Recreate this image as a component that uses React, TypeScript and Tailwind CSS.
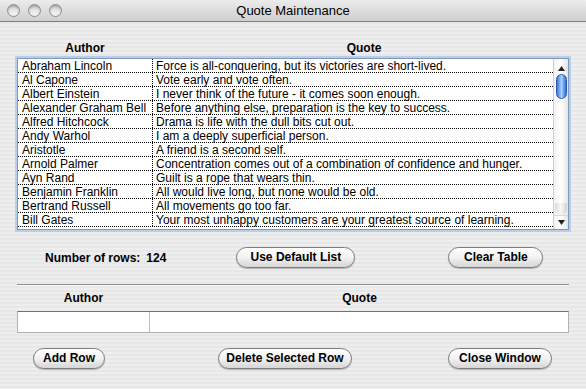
import React from "react";

const quotes: [string, string][] = [
  ["Abraham Lincoln", "Force is all-conquering, but its victories are short-lived."],
  ["Al Capone", "Vote early and vote often."],
  ["Albert Einstein", "I never think of the future - it comes soon enough."],
  ["Alexander Graham Bell", "Before anything else, preparation is the key to success."],
  ["Alfred Hitchcock", "Drama is life with the dull bits cut out."],
  ["Andy Warhol", "I am a deeply superficial person."],
  ["Aristotle", "A friend is a second self."],
  ["Arnold Palmer", "Concentration comes out of a combination of confidence and hunger."],
  ["Ayn Rand", "Guilt is a rope that wears thin."],
  ["Benjamin Franklin", "All would live long, but none would be old."],
  ["Bertrand Russell", "All movements go too far."],
  ["Bill Gates", "Your most unhappy customers are your greatest source of learning."],
];

const AquaButton = ({ label, className }: { label: string; className: string }) => (
  <button
    className={`h-[21px] rounded-full border border-[#7c7c7c] bg-gradient-to-b from-white via-[#f2f2f2] to-[#d6d6d6] text-[12px] leading-[19px] font-bold text-black shadow-[0_1px_1px_rgba(0,0,0,0.25)] ${className}`}
  >
    {label}
  </button>
);

const Light = () => (
  <div className="h-[13px] w-[13px] rounded-full border border-[#8e8e8e] bg-gradient-to-b from-[#c4c4c4] via-[#e6e6e6] to-[#f6f6f6] shadow-[inset_0_1px_2px_rgba(0,0,0,0.25)]" />
);

export default function App() {
  return (
    <div className="h-[389px] w-[586px] overflow-hidden bg-[repeating-linear-gradient(180deg,#eeeeee_0px,#eeeeee_2px,#e7e7e7_2px,#e7e7e7_4px)] font-[family-name:'Liberation_Sans',Arial,sans-serif] text-black">
      {/* Title bar */}
      <div className="relative flex h-[22px] items-center justify-center rounded-t-[5px] border-b border-[#7f7f7f] bg-gradient-to-b from-[#ececec] to-[#cfcfcf]">
        <div className="absolute left-[7px] top-[4px] flex gap-[8px]">
          <Light />
          <Light />
          <Light />
        </div>
        <span className="text-[13px] leading-[16px]">Quote Maintenance</span>
      </div>

      <div className="px-[17px]">
        {/* List headers */}
        <div className="mt-[19px] flex h-[14px] text-[12px] leading-[14px] font-bold">
          <div className="w-[136px] text-center">Author</div>
          <div className="flex-1 pl-[6px] text-center">Quote</div>
        </div>

        {/* Quote table */}
        <div className="mt-[3px] flex h-[172px] border border-[#7e97ba] bg-white shadow-[0_0_0_2px_#b9cfe9]">
          <div className="flex-1 overflow-hidden">
            {quotes.map(([author, quote]) => (
              <div
                key={author}
                className="flex h-[14px] border-b border-dotted border-black text-[12px] leading-[14px]"
              >
                <div className="w-[135px] shrink-0 border-r border-dotted border-black pl-[4px] whitespace-nowrap">
                  {author}
                </div>
                <div className="flex-1 pl-[3px] whitespace-nowrap">{quote}</div>
              </div>
            ))}
          </div>
          {/* Scroll bar */}
          <div className="flex w-[15px] flex-col border-l border-[#cfcfcf] bg-gradient-to-r from-[#f4f4f4] via-white to-[#e4e4e4]">
            <div className="flex h-[12px] items-end justify-center">
              <svg width="7" height="5" viewBox="0 0 7 5">
                <path d="M3.5 0 L7 5 L0 5 Z" fill="#222" />
              </svg>
            </div>
            <div className="mx-auto mt-[3px] h-[25px] w-[11px] rounded-full border border-[#2a5bb0] bg-gradient-to-r from-[#3a78d8] via-[#a9d0ff] to-[#2f6fd0]" />
            <div className="mx-[1px] mt-auto h-[12px] rounded-b-full bg-gradient-to-r from-[#dcdcdc] via-[#f8f8f8] to-[#cfcfcf]" />
            <div className="flex h-[14px] items-center justify-center border-t border-[#d8d8d8]">
              <svg width="7" height="5" viewBox="0 0 7 5">
                <path d="M0 0 L7 0 L3.5 5 Z" fill="#222" />
              </svg>
            </div>
          </div>
        </div>
      </div>

      {/* Row count + actions */}
      <div className="mt-[17px] flex h-[21px] items-center text-[12px] font-bold">
        <span className="ml-[45px]">Number of rows:</span>
        <span className="ml-[6px]">124</span>
        <AquaButton label="Use Default List" className="ml-[70px] w-[119px]" />
        <AquaButton label="Clear Table" className="ml-[93px] w-[95px]" />
      </div>

      <div className="mx-[17px] mt-[16px] h-px bg-[#8e8e8e] shadow-[0_1px_0_#fafafa]" />

      {/* New row entry */}
      <div className="px-[17px]">
        <div className="mt-[6px] flex h-[14px] text-[12px] leading-[14px] font-bold">
          <div className="w-[133px] text-center">Author</div>
          <div className="flex-1 text-center">Quote</div>
        </div>
        <div className="mt-[6px] flex h-[22px] border border-[#b2b2b2] border-t-[#737373] bg-white">
          <div className="w-[132px] border-r border-[#bdbdbd]" />
          <div className="flex-1" />
        </div>
      </div>

      <div className="mt-[15px] flex">
        <AquaButton label="Add Row" className="ml-[33px] w-[72px]" />
        <AquaButton label="Delete Selected Row" className="ml-[113px] w-[134px]" />
        <AquaButton label="Close Window" className="ml-[96px] w-[104px]" />
      </div>
    </div>
  );
}
